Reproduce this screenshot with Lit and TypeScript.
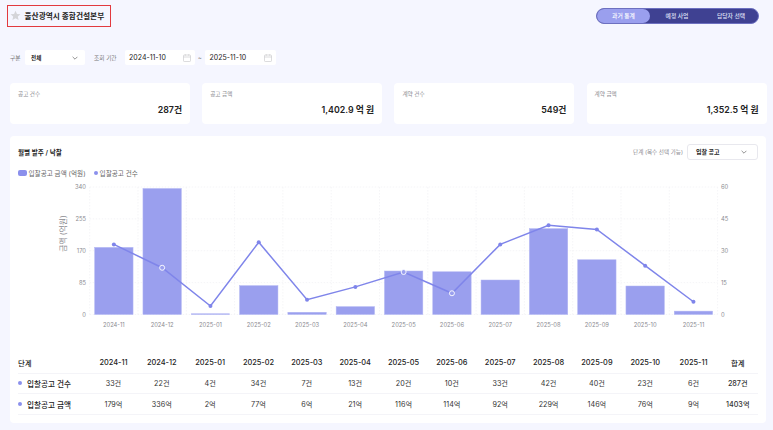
import { LitElement, html, css, svg } from "lit";
import { customElement } from "lit/decorators.js";

const months = ["2024-11","2024-12","2025-01","2025-02","2025-03","2025-04","2025-05","2025-06","2025-07","2025-08","2025-09","2025-10","2025-11"];
const counts = [33,22,4,34,7,13,20,10,33,42,40,23,6];
const amounts = [179,336,2,77,6,21,116,114,92,229,146,76,9];

const L = 89.7, STEP = 48.3, TOP = 187, BOT = 314.5;
const cx = (i: number) => L + STEP * (i + 0.5);
const yA = (v: number) => BOT - (v / 340) * (BOT - TOP);
const yC = (v: number) => BOT - (v / 60) * (BOT - TOP);
const R = L + STEP * 13;

const chevron = html`<svg class="chev" width="6" height="4" viewBox="0 0 6 4"><path d="M.6 .8l2.4 2.4 2.4-2.4" fill="none" stroke="#666" stroke-width=".7"/></svg>`;
const cal = html`<svg class="cal" width="8" height="8" viewBox="0 0 8 8"><rect x=".5" y="1" width="7" height="6.5" rx=".8" fill="none" stroke="#c4c4c8" stroke-width=".6"/><path d="M.5 3h7M2.3.3v1.4M5.7.3v1.4" fill="none" stroke="#c4c4c8" stroke-width=".6"/></svg>`;

@customElement("app-root")
export class AppRoot extends LitElement {
  static styles = css`
    :host { display: block; width: 773px; height: 430px; overflow: hidden; background: #f5f6ff; font-family: Inter, "Noto Sans CJK KR", sans-serif; color: #222; box-sizing: border-box; }
    * { box-sizing: border-box; }
    .page { padding: 4px 7px 0 10px; display: flex; flex-direction: column; }
    .top { display: flex; justify-content: space-between; align-items: flex-start; height: 46px; margin-left: -3.5px; margin-right: -7px; padding-right: 14.5px; }
    .titlebox { width: 104px; height: 22.5px; border: 1px solid #e23a3f; display: flex; align-items: center; padding-left: 2.5px; gap: 3.5px; margin-top: .5px; }
    .title { font-size: 7.7px; font-weight: 600; color: #1d1d22; white-space: nowrap; }
    .tabs { margin-top: 3.5px; width: 163px; height: 16.5px; border-radius: 9px; background: #3f4192; padding: .5px; display: flex; font-size: 5.8px; font-weight: 500; color: #dfe0f5; border: 1px solid #6d70c0; }
    .tab { display: flex; align-items: center; justify-content: center; flex: 0 0 54px; white-space: nowrap; }
    .tab.on { background: #9a9fee; border-radius: 8px; color: #fff; flex: 0 0 53px; }
    .filters { display: flex; align-items: center; height: 15px; font-size: 5.7px; color: #777; }
    .field { background: #fff; border-radius: 2px; height: 14.5px; display: flex; align-items: center; justify-content: space-between; color: #222; white-space: nowrap; }
    .sel { width: 60px; margin: 0 9px 0 4.6px; padding: 0 7.5px 0 6px; font-weight: 600; font-size: 5.6px; }
    .date { width: 70.5px; padding: 0 4px 0 4.5px; font-size: 7px; margin-left: 8px; }
    .tilde { margin: 0 2.5px 0 3px; color: #888; width: 4.5px; }
    .date.b { margin-left: 0; }
    .cards { display: grid; grid-template-columns: repeat(4, 180px); gap: 12.2px; margin-top: 18px; }
    .card { background: #fff; border-radius: 4px; height: 41px; padding: 8px 8px 0; display: flex; flex-direction: column; }
    .card .lb { font-size: 5.6px; color: #8a8a90; height: 7px; line-height: 7px; }
    .card .val { font-size: 8.8px; font-weight: 600; text-align: right; margin-top: 6px; line-height: 11px; color: #222; }
    .main { background: #fff; border-radius: 4px; margin-top: 12px; height: 287px; width: 756px; padding: 0 8px; position: relative; }
    .head { display: flex; justify-content: space-between; align-items: center; height: 31px; }
    .h { font-size: 6.6px; font-weight: 600; color: #222; }
    .stage { display: flex; align-items: center; gap: 4px; font-size: 5.6px; color: #8a8a90; }
    .stagesel { width: 71px; height: 16px; background: #fff; border: 1px solid #e8e8ee; border-radius: 3px; display: flex; align-items: center; justify-content: space-between; padding: 0 10px 0 8px; font-size: 6px; font-weight: 600; color: #222; }
    .legend { display: flex; align-items: center; font-size: 6.6px; color: #666; height: 12px; }
    .swatch { width: 8.5px; height: 6px; border-radius: 2px; background: #8b90ec; margin-right: 2px; }
    .dot { width: 4px; height: 4px; border-radius: 50%; background: #8b90ec; flex: none; }
    .legend .dot { margin: 0 2px 0 8px; }
    .plot { display: block; position: absolute; left: -10px; top: -136px; pointer-events: none; }
    .table { position: absolute; left: 8px; top: 216.5px; width: 740px; display: grid; grid-template-columns: 71.3px repeat(13, 48.35px) 40px; font-size: 7.2px; color: #333; }
    .c { height: 20.8px; display: flex; align-items: center; justify-content: center; white-space: nowrap; border-bottom: 1px solid #f4f4f8; }
    .c.first { justify-content: flex-start; gap: 5px; color: #222; font-weight: 500; font-size: 7.6px; }
    .c.th { font-weight: 500; color: #222; height: 21px; font-size: 7.4px; }
    .sum { font-weight: 500; }
  `;

  chart() {
    const grid = Array.from({ length: 14 }, (_, i) => L + STEP * i);
    const path = counts.map((c, i) => `${i ? "L" : "M"}${cx(i)} ${yC(c)}`).join(" ");
    const tf = "font-family:Inter,sans-serif;font-size:5.8px;fill:#8a8a90";
    return html`<svg class="plot" width="773" height="430" viewBox="0 0 773 430">
      ${[0,85,170,255,340].map(v => svg`<line x1=${L} x2=${R} y1=${yA(v)} y2=${yA(v)} stroke="#eeeef2" stroke-width=".6" stroke-dasharray="1.5 1.5"/>
        <text x="86" y=${yA(v) + 2} text-anchor="end" style=${tf}>${v}</text>`)}
      ${[0,15,30,45,60].map(v => svg`<text x="721" y=${yC(v) + 2} style=${tf}>${v}</text>`)}
      ${grid.map(x => svg`<line x1=${x} x2=${x} y1=${TOP} y2=${BOT} stroke="#eeeef2" stroke-width=".6" stroke-dasharray="1.5 1.5"/>`)}
      ${amounts.map((a, i) => svg`<rect x=${cx(i) - 19.2} y=${yA(a)} width="38.4" height=${BOT - yA(a)} fill="#9a9fee" stroke="#b4b7f4" stroke-width=".5"/>`)}
      <path d=${path} fill="none" stroke="#7f85ea" stroke-width="1.5"/>
      ${counts.map((c, i) => (i === 1 || i === 6 || i === 7)
        ? svg`<circle cx=${cx(i)} cy=${yC(c)} r="2.5" fill="#9a9fee" stroke="#fff" stroke-width=".9"/>`
        : svg`<circle cx=${cx(i)} cy=${yC(c)} r="2" fill="#7f85ea"/>`)}
      ${months.map((m, i) => svg`<text x=${cx(i)} y="327" text-anchor="middle" style=${tf}>${m}</text>`)}
      <text transform="translate(65.5 233.5) rotate(-90)" text-anchor="middle" style="font-family:Inter,'Noto Sans CJK KR',sans-serif;font-size:7.8px;fill:#8a8a90">금액 (억원)</text>
    </svg>`;
  }

  render() {
    const cards = [["공고 건수","287건"],["공고 금액","1,402.9 억 원"],["계약 건수","549건"],["계약 금액","1,352.5 억 원"]];
    return html`<div class="page">
      <div class="top">
        <div class="titlebox">
          <svg width="11" height="11" viewBox="0 0 24 24"><path d="M12 1.5l3.2 7 7.6.8-5.7 5.1 1.6 7.5L12 18.1l-6.7 3.8 1.6-7.5L1.2 9.3l7.6-.8z" fill="#d4d4d8"/></svg>
          <span class="title">울산광역시 종합건설본부</span>
        </div>
        <div class="tabs"><div class="tab on">과거 통계</div><div class="tab">예정 사업</div><div class="tab">담당자 선택</div></div>
      </div>
      <div class="filters">
        <span>구분</span>
        <div class="field sel"><span>전체</span>${chevron}</div>
        <span>조회 기간</span>
        <div class="field date"><span>2024-11-10</span>${cal}</div>
        <span class="tilde">~</span>
        <div class="field date b"><span>2025-11-10</span>${cal}</div>
      </div>
      <div class="cards">${cards.map(c => html`<div class="card"><div class="lb">${c[0]}</div><div class="val">${c[1]}</div></div>`)}</div>
      <div class="main">
        <div class="head"><span class="h">월별 발주 / 낙찰</span>
          <div class="stage"><span>단계 (복수 선택 가능)</span><div class="stagesel"><span>입찰 공고</span>${chevron}</div></div>
        </div>
        <div class="legend"><span class="swatch"></span><span>입찰공고 금액 (억원)</span><span class="dot"></span><span>입찰공고 건수</span></div>
        ${this.chart()}
        <div class="table">
          <div class="c first th">단계</div>${months.map(m => html`<div class="c th">${m}</div>`)}<div class="c th">합계</div>
          <div class="c first"><span class="dot"></span>입찰공고 건수</div>${counts.map(v => html`<div class="c">${v}건</div>`)}<div class="c sum">287건</div>
          <div class="c first"><span class="dot"></span>입찰공고 금액</div>${amounts.map(v => html`<div class="c">${v}억</div>`)}<div class="c sum">1403억</div>
        </div>
      </div>
    </div>`;
  }
}
